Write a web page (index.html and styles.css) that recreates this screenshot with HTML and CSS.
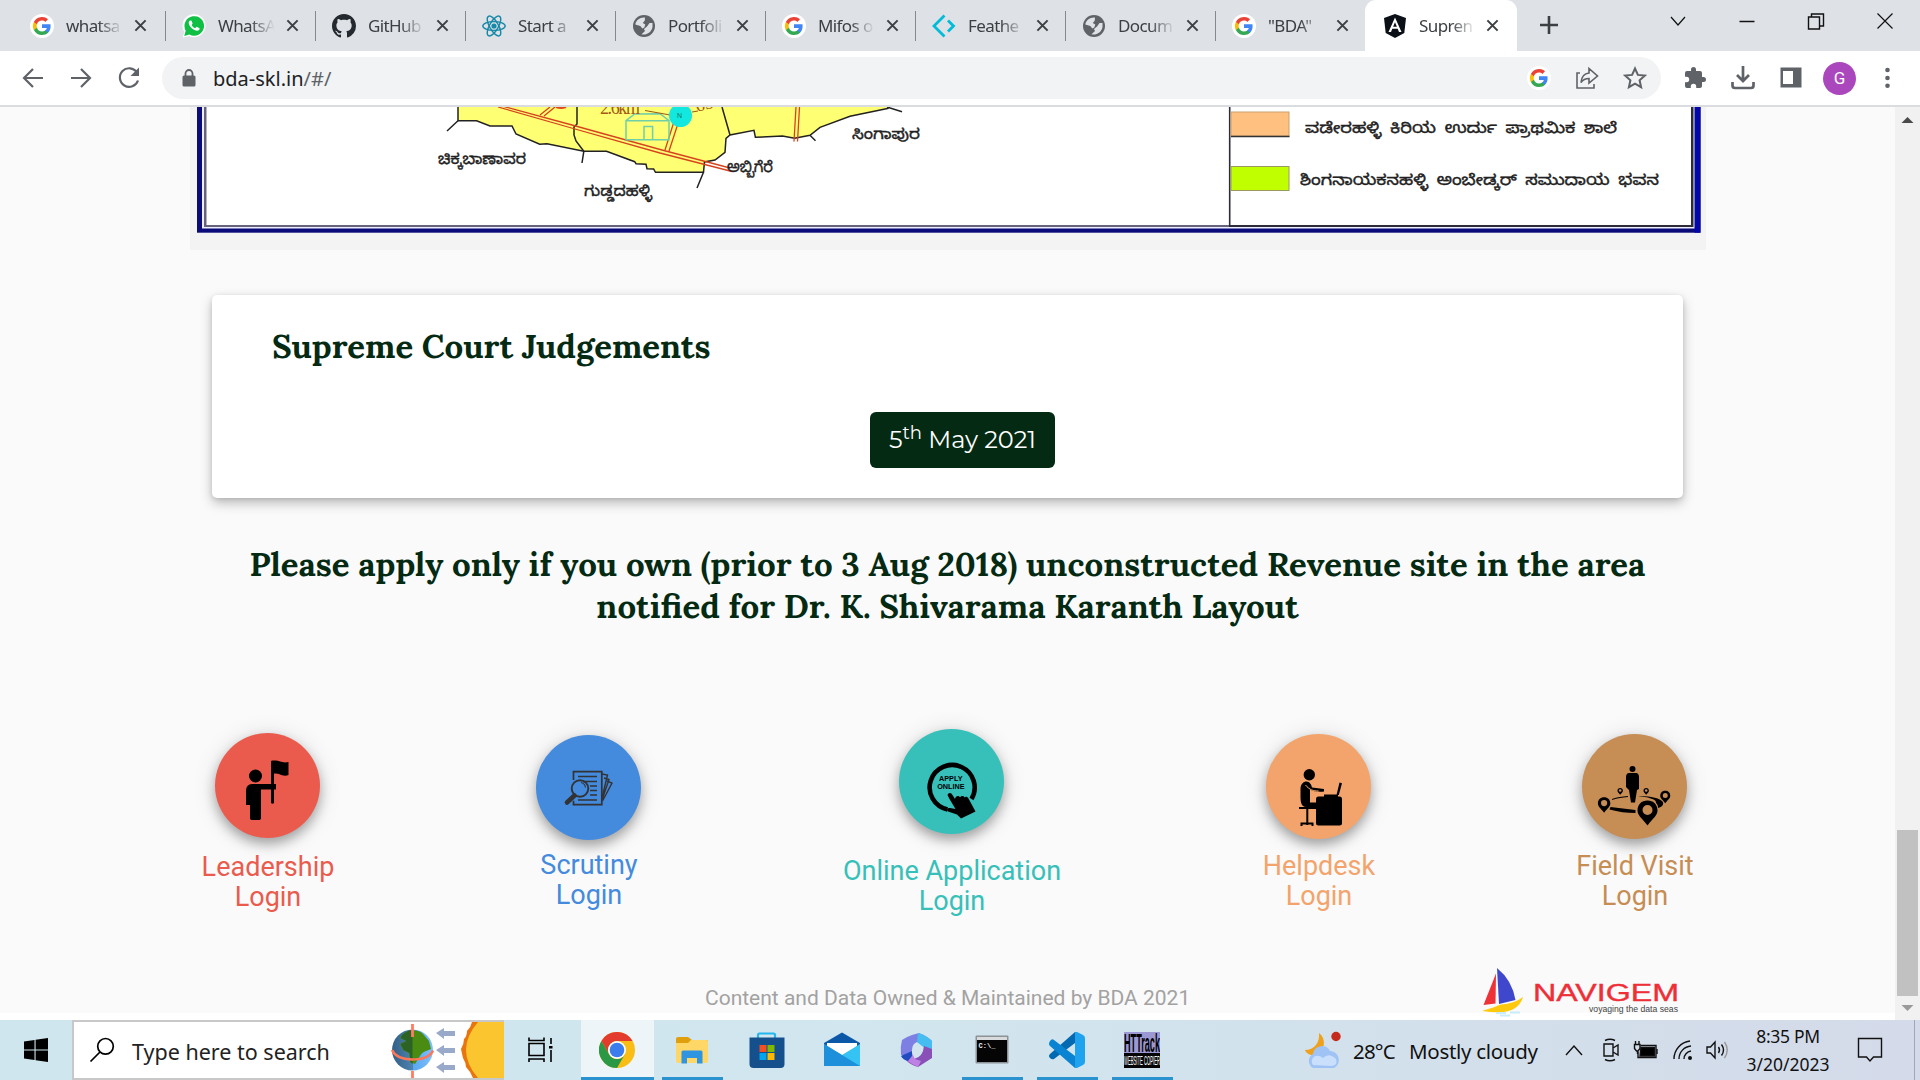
FILE: index.html
```html
<!DOCTYPE html>
<html lang="en">
<head>
<meta charset="utf-8">
<title>Supreme Court Judgements</title>
<link rel="stylesheet" href="styles.css">
</head>
<body>
<svg class="defs" width="0" height="0" aria-hidden="true">
  <symbol id="google" viewBox="0 0 24 24">
    <circle cx="12" cy="12" r="12" fill="#fff"/>
    <path d="M20.6 12.2c0-.7-.1-1.3-.2-1.9H12v3.6h4.8a4.1 4.1 0 0 1-1.8 2.7v2.3h2.9c1.7-1.6 2.7-3.9 2.7-6.7z" fill="#4285f4"/>
    <path d="M12 21c2.4 0 4.500-.8 6-2.200l-2.900-2.300c-.8.6-1.900.9-3.100.9a5.400 5.400 0 0 1-5.100-3.700H3.900V16A9 9 0 0 0 12 21z" fill="#34a853"/>
    <path d="M6.900 13.700a5.300 5.300 0 0 1 0-3.400V8H3.900a9 9 0 0 0 0 8z" fill="#fbbc05"/>
    <path d="M12 6.600c1.300 0 2.500.5 3.400 1.300L18 5.300A9 9 0 0 0 3.900 8l3 2.300A5.400 5.400 0 0 1 12 6.600z" fill="#ea4335"/>
  </symbol>
  <symbol id="close" viewBox="0 0 14 14"><path d="M1.500 1.500l11 11M12.500 1.500l-11 11" stroke="#3c4043" stroke-width="2.200" fill="none"/></symbol>
  <symbol id="world" viewBox="0 0 24 24">
    <circle cx="12" cy="12" r="11" fill="#5f6368"/>
    <path d="M13 3.500C8 3 4 6 3.300 10.500l5 1.500 2 2.500 2-1 1-3-2.500-1.500 2-2.500zM20.500 9l-3 0-2.500 3.500-3 2.500 1 2-3.500 3.300c5 1.200 10-2 11-7.300z" fill="#dee1e6"/>
  </symbol>
</svg>

<header class="tabstrip">
  <div class="tab tab-first"><svg class="fav"><use href="#google"/></svg><span class="tab-title">whatsa</span><svg class="x"><use href="#close"/></svg></div>
  <div class="tab"><svg class="fav" viewBox="0 0 24 24"><circle cx="12" cy="11.700" r="11.500" fill="#fff"/><path d="M.8 23.500L2.500 17l5 5z" fill="#fff"/><path d="M2.200 22l1.500-5.300A9.800 9.800 0 1 1 7.500 20.500z" fill="#10c045"/><path d="M8.300 6.500c-.8 0-1.700 1-1.600 2.300.3 4 5 8 8.600 8 1.500-.1 2.400-1.200 2.300-2.500l-3-1.500-1.400 1.500c-1.500-.6-2.900-1.900-3.600-3.400L10.600 9.600 9.500 6.800z" fill="#fff"/></svg><span class="tab-title">WhatsA</span><svg class="x"><use href="#close"/></svg></div>
  <div class="tab"><svg class="fav" viewBox="0 0 16 16"><path fill="#24292f" d="M8 0C3.580 0 0 3.580 0 8c0 3.540 2.290 6.530 5.470 7.590.4.070.55-.17.55-.38 0-.19-.01-.82-.01-1.490-2.010.37-2.530-.49-2.690-.94-.09-.23-.48-.94-.82-1.130-.28-.15-.68-.52-.01-.53.63-.01 1.080.58 1.230.82.72 1.210 1.870.87 2.330.66.070-.52.28-.87.51-1.070-1.780-.2-3.640-.89-3.640-3.950 0-.87.31-1.590.82-2.150-.08-.2-.36-1.020.08-2.120 0 0 .67-.21 2.200.82.64-.18 1.320-.27 2-.27s1.360.09 2 .27c1.530-1.040 2.200-.82 2.200-.82.44 1.100.16 1.920.08 2.120.51.56.82 1.270.82 2.150 0 3.070-1.870 3.750-3.650 3.950.29.25.54.73.54 1.480 0 1.070-.01 1.930-.01 2.200 0 .21.15.46.55.38A8.010 8.010 0 0 0 16 8c0-4.420-3.580-8-8-8z"/></svg><span class="tab-title">GitHub</span><svg class="x"><use href="#close"/></svg></div>
  <div class="tab"><svg class="fav" viewBox="0 0 24 24" fill="none" stroke="#1688a8" stroke-width="1.400"><circle cx="12" cy="12" r="1.900" fill="#1688a8"/><ellipse cx="12" cy="12" rx="11.200" ry="4.400"/><ellipse cx="12" cy="12" rx="11.200" ry="4.400" transform="rotate(60 12 12)"/><ellipse cx="12" cy="12" rx="11.200" ry="4.400" transform="rotate(120 12 12)"/></svg><span class="tab-title">Start a</span><svg class="x"><use href="#close"/></svg></div>
  <div class="tab"><svg class="fav"><use href="#world"/></svg><span class="tab-title">Portfoli</span><svg class="x"><use href="#close"/></svg></div>
  <div class="tab"><svg class="fav"><use href="#google"/></svg><span class="tab-title">Mifos o</span><svg class="x"><use href="#close"/></svg></div>
  <div class="tab"><svg class="fav" viewBox="0 0 24 24" fill="none" stroke="#00bcd9" stroke-width="2.800"><path d="M12.500 1.500L2 12l10.500 10.500M16 6.500l5.500 5.500-5.500 5.500"/></svg><span class="tab-title">Feathe</span><svg class="x"><use href="#close"/></svg></div>
  <div class="tab"><svg class="fav"><use href="#world"/></svg><span class="tab-title">Docum</span><svg class="x"><use href="#close"/></svg></div>
  <div class="tab tab-last"><svg class="fav"><use href="#google"/></svg><span class="tab-title">"BDA"</span><svg class="x"><use href="#close"/></svg></div>
  <div class="tab tab-active"><svg class="fav" viewBox="0 0 24 24"><path d="M12 0l11 4-1.700 15L12 24l-9.300-5L1 4z" fill="#0b1017"/><path d="M12 3.500L5.500 18H8l1.300-3.300h5.400L16 18h2.500zm0 4.800l1.900 4.400h-3.800z" fill="#fff"/></svg><span class="tab-title">Supren</span><svg class="x"><use href="#close"/></svg></div>
  <svg class="newtab" viewBox="0 0 18 18"><path d="M9 0v18M0 9h18" stroke="#3c4043" stroke-width="2.600"/></svg>
  <div class="winctl">
    <svg viewBox="0 0 20 20"><path d="M3 6l7 8 7-8" /></svg>
    <svg viewBox="0 0 20 20"><path d="M2.500 10.500h15" stroke-width="1.500"/></svg>
    <svg viewBox="0 0 20 20"><path d="M2.500 6h11v12h-11zM5.500 6V3h12v12h-4" stroke-width="1.400"/></svg>
    <svg viewBox="0 0 20 20"><path d="M2.500 2.500l15 15M17.500 2.500l-15 15"/></svg>
  </div>
</header>

<nav class="toolbar">
  <svg class="tb" viewBox="0 0 24 24"><path d="M22 12H3M12 3l-9 9 9 9"/></svg>
  <svg class="tb" viewBox="0 0 24 24"><path d="M2 12h19M12 3l9 9-9 9"/></svg>
  <svg class="tb" viewBox="0 0 24 24"><path d="M20 6.500A9.300 9.300 0 1 0 21 14.500"/><path d="M22 1.500v8.500h-8.500z" fill="#5f6368" stroke="none"/></svg>
  <div class="omnibox">
    <svg class="lock" viewBox="0 0 14 18"><path d="M3.500 8V4.500a3.500 3.500 0 0 1 7 0V8" fill="none" stroke="#5f6368" stroke-width="1.800"/><rect x=".5" y="6.500" width="13" height="11" rx="1.500" fill="#5f6368"/></svg>
    <span class="url">bda-skl.in<span class="url-path">/#/</span></span>
    <svg class="ob ob-google"><use href="#google"/></svg>
    <svg class="ob" viewBox="0 0 24 24"><path d="M5 7H2v15h17v-4M14 7V2.500l8.500 7.500-8.500 7v-4.500c-3.500 0-6 1-8 4 .5-5.500 3-9 8-9.500z" /></svg>
    <svg class="ob" viewBox="0 0 24 24"><path d="M12 2.500l2.900 6.400 7 .7-5.300 4.700 1.500 6.900-6.100-3.600-6.100 3.600 1.500-6.900L2.100 9.600l7-.7z" stroke-width="2"/></svg>
  </div>
  <svg class="tool" viewBox="0 0 24 24"><path d="M20.500 11H19V7a2 2 0 0 0-2-2h-4V3.500a2.500 2.500 0 0 0-5 0V5H4a2 2 0 0 0-2 2v3.800h1.500a2.700 2.700 0 0 1 0 5.400H2V20a2 2 0 0 0 2 2h3.800v-1.500a2.700 2.700 0 0 1 5.400 0V22H17a2 2 0 0 0 2-2v-4h1.500a2.500 2.500 0 0 0 0-5z" fill="#5f6368"/></svg>
  <svg class="tool" viewBox="0 0 24 24"><path d="M12 0v14M6 9l6 6 6-6M1.500 16v3.500a2.500 2.500 0 0 0 2.500 2.500h16a2.500 2.500 0 0 0 2.500-2.500V16" fill="none" stroke="#5f6368" stroke-width="2.700"/></svg>
  <svg class="tool" viewBox="0 0 24 24"><path d="M1.500 1.500h21v20h-21zM4 5v13h10V5z" fill="#5f6368" fill-rule="evenodd"/></svg>
  <span class="avatar">G</span>
  <svg class="tool" viewBox="0 0 24 24" fill="#5f6368"><circle cx="11.500" cy="4" r="2.300"/><circle cx="11.500" cy="12" r="2.300"/><circle cx="11.500" cy="19.800" r="2.300"/></svg>
</nav>

<div class="viewport">
<main class="page">
  <svg class="map" viewBox="190 107 1516 143" font-family="'Noto Sans Kannada','Lohit Kannada','Noto Sans',sans-serif">
    <rect x="190" y="107" width="1516" height="143" fill="#f3f3f3"/>
    <rect x="197" y="90" width="1503.500" height="142.700" fill="#0a0a78"/>
    <rect x="1694.500" y="90" width="6" height="142.700" fill="#0307a8"/>
    <rect x="202" y="90" width="1492.500" height="138.500" fill="#eef"/>
    <rect x="204" y="90" width="1489" height="137" fill="#66647c"/>
    <path d="M1691 107h2.500v120H1229v-2h462z" fill="#2c2c38"/>
    <rect x="206.500" y="90" width="1484.500" height="135" fill="#fff"/>
    <path d="M458 100V120.700h18.600L490 126h22l4 8 23.700 10.300 7.300-.6 36.800 7.600h22.700l28.200 10.400 1.300 2 10 .6 1 4.400 6.600.3 1.900 3.300h48l1-10.300 10.500-2 10-7.700 1-14 4-3.300 24-4.700 1.400 7 27.100-1.300 12.100 2.300 15.400-3 10-8 30-11 38.700-8 4-8z" fill="#ffff73"/>
    <g fill="none" stroke="#222" stroke-width="1.500">
      <path d="M458 100V120.700h18.600L490 126h22l4 8 23.700 10.300 7.300-.6 36.800 7.600h22.700l28.200 10.400 1.300 2 10 .6 1 4.400 6.600.3 1.900 3.300h48l1-10.300 10.500-2 10-7.700 1-14 4-3.300 24-4.700 1.400 7 27.100-1.300 12.100 2.300 15.400-3 10-8 30-11 38.700-8"/>
      <path d="M458 120.700L447 131M583.800 151.300L582 163M577 107v17l-3 3v8l2 6 7.800 10.300M722 107l8 28M703.500 172.300L697 188M810 135.300l5.500 5.400M887 107l15 4.700"/>
    </g>
    <g fill="none" stroke="#d8431f" stroke-width="1.300">
      <path d="M502 106l70 19 90 25 68 18M498 107l70 20 92 26 72 18.500M540 115l10-8M544 116l11-9M799.500 107l-2 34.500M796 107l-2 34.500M665 150l9.500-30M669 151l9.500-29"/>
    </g>
    <path d="M626 139.700v-19l8.700-6.700 25.300-.3 9 7v19zM626 120.700h43M644 139.700V126.500h8.600v13.200" fill="none" stroke="#70cfa8" stroke-width="1.500"/>
    <path d="M645 110.500l28 5M692 112l6-1" stroke="#a15b16" stroke-width="1.200"/>
    <circle cx="680.500" cy="115.500" r="11.500" fill="#12e8df"/>
    <path d="M556 107q5 2 10 0" stroke="#e04a20" stroke-width="2" fill="none"/>
    <text x="677" y="118" font-size="7" fill="#175" font-family="Liberation Sans">N</text>
    <text x="600" y="113.500" font-size="18" fill="#a35a17" font-family="Liberation Serif" textLength="40">2.6km</text>
    <text x="697" y="112" font-size="18" fill="#a35a17" font-family="Liberation Serif" transform="rotate(-15 697 112)">65</text>
    <g fill="#222" stroke="#222" stroke-width=".4" font-size="15">
      <text x="438" y="164" textLength="88" lengthAdjust="spacingAndGlyphs">ಚಿಕ್ಕಬಾಣಾವರ</text>
      <text x="584" y="196" textLength="68" lengthAdjust="spacingAndGlyphs">ಗುಡ್ಡದಹಳ್ಳಿ</text>
      <text x="727" y="172" textLength="46" lengthAdjust="spacingAndGlyphs">ಅಬ್ಬಿಗೆರೆ</text>
      <text x="852" y="139" textLength="68" lengthAdjust="spacingAndGlyphs">ಸಿಂಗಾಪುರ</text>
      <g word-spacing="3">
      <text x="1305" y="133" textLength="312" lengthAdjust="spacingAndGlyphs">ವಡೇರಹಳ್ಳಿ ಕಿರಿಯ ಉರ್ದು ಪ್ರಾಥಮಿಕ ಶಾಲೆ</text>
      <text x="1300" y="185" textLength="359" lengthAdjust="spacingAndGlyphs">ಶಿಂಗನಾಯಕನಹಳ್ಳಿ ಅಂಬೇಡ್ಕರ್ ಸಮುದಾಯ ಭವನ</text>
      </g>
    </g>
    <path d="M1229.700 107v119" stroke="#2c2c38" stroke-width="1.600"/>
    <rect x="1231" y="112" width="58" height="24" fill="#ffc080" stroke="#c9a070"/>
    <path d="M1231 136.500h58.500" stroke="#333" stroke-width="1.300"/>
    <rect x="1231" y="166.500" width="58" height="24" fill="#bfff00" stroke="#9a9a60"/>
  </svg>

  <section class="card">
    <h2 class="card-title">Supreme Court Judgements</h2>
    <a class="date-btn">5<sup>th</sup> May 2021</a>
  </section>

  <h2 class="notice">Please apply only if you own (prior to 3 Aug 2018) unconstructed Revenue site in the area<br>notified for Dr. K. Shivarama Karanth Layout</h2>

  <section class="portals">
    <a class="portal leadership">
      <span class="disc"><svg viewBox="0 0 105 105"><circle cx="40.500" cy="43" r="6.500"/><path d="M31 58c0-4 2-7 6-7h24v5.500H46V85c0 1.500-1 2-2 2h-7c-1.500 0-2-1-2-2V72h-4z"/><path d="M56 29c0-1 .5-1.500 1.500-1.500h3c4 0 7 3 13 1.500v13c-5 2.500-8-2-14.500-1.500V70c-1 1-2 1-3 0z"/></svg></span>
      <span class="label">Leadership<br>Login</span>
    </a>
    <a class="portal scrutiny">
      <span class="disc"><svg viewBox="0 0 105 105" fill="none" stroke="#333" stroke-width="1.700"><path d="M37.500 45v-8.300h28.300v33H37.500v-4"/><path d="M42 41.500h19M47 46.500h14M54 51h7M54 55.500h7M54 60h7M42 65h19" stroke-width="1.500"/><path d="M66 39l5.500 1L66 63M68 43l5 1.500L66 65M71 46l5 2-9.500 18" stroke-width="1.400"/><circle cx="44" cy="53.500" r="8.300" stroke-width="1.900"/><path d="M45 47.500a6 6 0 0 1 4.500 5" stroke-width="1.200"/><path d="M38.500 60.500l-7.500 7" stroke-width="4.600" stroke-linecap="round"/></svg></span>
      <span class="label">Scrutiny<br>Login</span>
    </a>
    <a class="portal online">
      <span class="disc"><svg viewBox="0.500 0 105 105"><path d="M49 80.500a22.500 22.500 0 1 1 24-10.500" fill="none" stroke="#000" stroke-width="4.600"/><text x="40.500" y="52" textLength="23.500" lengthAdjust="spacingAndGlyphs" font-family="Liberation Sans" font-weight="bold" font-size="7.500">APPLY</text><text x="38.700" y="60" textLength="27.500" lengthAdjust="spacingAndGlyphs" font-family="Liberation Sans" font-weight="bold" font-size="7.500">ONLINE</text><path d="M49 66c1-3 4-2.500 5 0l2.500 4 .5-1.500c1-2 4-2 4.500 0 1-2 4-2 4.500 0 1-1.500 3-1 4 1l7 13-14.500 7-4-4-9-3c-2-2 0-4 2-3.500l5.500 1-6-10z"/></svg></span>
      <span class="label">Online Application<br>Login</span>
    </a>
    <a class="portal helpdesk">
      <span class="disc"><svg viewBox="0 0 105 105"><circle cx="43.300" cy="40.700" r="5.700"/><path d="M34.500 55c0-5 3-7.500 6-7.500s5 3 5.500 6l12 1.500v2.500c-5 .5-11 0-14-2v13h7V73H40c-5 0-5.500-6-5.500-10z"/><path d="M39.500 51c4 5 8 6 13 6" fill="none" stroke="#f2a46c" stroke-width="1"/><path d="M73.500 48.500l2.500.7L72.800 61h-2.300zM58 60.500h14V63H58z"/><rect x="50" y="62.500" width="26" height="29" rx="2.500"/><path d="M33 74h17M41.300 75v16M35.500 92v-2.500h11V92" fill="none" stroke="#000" stroke-width="2"/></svg></span>
      <span class="label">Helpdesk<br>Login</span>
    </a>
    <a class="portal field">
      <span class="disc"><svg viewBox="0 0 105 105"><circle cx="50.500" cy="35" r="3"/><path d="M47 39h7c2 0 3 2 3 4v12l-2 1-2 12.500h-4L47 56l-3-3V43c0-2 1-4 3-4z"/><path id="pin" fill-rule="evenodd" d="M65.500 66.500c6 0 10 4 10 10 0 5-4 7-10 15-6-8-10-10-10-15 0-6 4-10 10-10zm0 4.500a5 5 0 1 0 0 10 5 5 0 0 0 0-10z"/><use href="#pin" transform="translate(-18.500 22) scale(.62)"/><use href="#pin" transform="translate(50.500 23.500) scale(.5)"/><use href="#pin" transform="translate(20.500 36) scale(.27)"/><use href="#pin" transform="translate(46.500 36) scale(.27)"/><path d="M28.500 73l25 3v3c-9 0-17-1-26-3.500zM30 65c5-2 10-2.500 16-3v1c-6 .5-10 1-16 3zM56 62c8 0 20 1 24 5 3 3 0 6-4 7 0-3-1-4-2-5 1-4-9-6-18-7z"/></svg></span>
      <span class="label">Field Visit<br>Login</span>
    </a>
  </section>

  <footer class="foot">
    <span class="copyright">Content and Data Owned &amp; Maintained by BDA 2021</span>
    <svg class="navigem" viewBox="0 0 200 50" font-family="'Liberation Sans',Arial,sans-serif">
      <path d="M14 5.500L1.500 37l12-1.500z" fill="#ee3338"/><path d="M15 0q15 12 18.500 32L17 36z" fill="#3f48cc"/><path d="M0 43q13-4 19-6.500Q32 36 41 29q-4 13-19 15-9 1-22-1z" fill="#ffc90e"/><path d="M14 45l10 0M18 47.500h10M28 44.500h10" stroke="#c9ecfa" stroke-width="2"/>
      <text x="51" y="33" font-size="24.500" textLength="146" lengthAdjust="spacingAndGlyphs" fill="#ee2f38" stroke="#ee2f38" stroke-width=".4">NAVIGEM</text>
      <text x="107" y="44" font-size="9.500" textLength="89" lengthAdjust="spacingAndGlyphs" fill="#444">voyaging the data seas</text>
    </svg>
  </footer>
</main>
<aside class="scrollbar">
  <svg viewBox="0 0 25 26"><path d="M6.500 16l6-6 6 6z" fill="#4a4a4a"/></svg>
  <div class="thumb"></div>
  <svg viewBox="0 0 25 24"><path d="M6.500 9l6 6 6-6z" fill="#9a9a9a"/></svg>
</aside>
</div>

<footer class="taskbar">
  <div class="start"><svg viewBox="0 0 24 24"><path d="M0 3.500L10.500 2v9.400H0zM11.600 1.800L24 0v11.400H11.600zM0 12.600h10.500V22L0 20.500zM11.600 12.600H24V24l-12.400-1.800z"/></svg></div>
  <div class="search">
    <svg class="mag" viewBox="0 0 26 26" fill="none" stroke="#000" stroke-width="1.700"><circle cx="16.500" cy="9.300" r="7.800"/><path d="M11 15L1.500 24.500"/></svg>
    <span class="search-text">Type here to search</span>
    <svg class="solar" viewBox="390 1022 114 56">
      <defs><linearGradient id="gl"><stop offset="0" stop-color="#315f86"/><stop offset=".5" stop-color="#4d83b0"/><stop offset=".5" stop-color="#58a6ee"/><stop offset="1" stop-color="#7ec0ff"/></linearGradient></defs>
      <circle cx="412.500" cy="1050" r="20.500" fill="url(#gl)"/>
      <path d="M402 1035c6-6 16-6 21-1l6 7 2 8c-5 2-9 3-11 7l-5 8-5-2-1-9-6-3-3-6 6-3-6-3z" fill="#4a8b12"/><path d="M402 1035c3-3 7-5 10.500-5v34l-2-2-1-9-6-3-3-6 6-3-6-3z" fill="#2c6324"/>
      <path d="M412.500 1024v13M412.500 1071v7" stroke="#ff7d61" stroke-width="2.800"/><path d="M392 1050q4 9 20 9.500 17 0 21-9" fill="none" stroke="#ff7558" stroke-width="2.500"/>
      <g fill="#98a9c9"><path id="arr" d="M436 1033l8-5v3h11v5h-11v3z"/><use href="#arr" y="17"/><use href="#arr" y="34"/></g>
      <path d="M472 1022q-1 5-5 9 0 5-3 8 0 5-3 10 1 5 2 9 3 5 3 9 5 5 7 11h31v-56z" fill="#e9750f"/><path d="M478 1022q-24 28 0 56h26v-56z" fill="#fbc52f"/>
    </svg>
  </div>
  <div class="task view"><svg viewBox="0 0 28 28" fill="none" stroke="#000" stroke-width="1.600"><path d="M4 7.500h15v12H4zM4 1.500v3h15v-3M4 26v-3h15v3M26 2v6M26 14v12"/><path d="M24 10h3.500v2.500H24z" fill="#000" stroke="none"/></svg></div>
  <div class="task chrome on"><svg viewBox="0 0 36 36"><circle cx="18" cy="18" r="18" fill="#f9bd15"/><path d="M2.400 9A18 18 0 0 1 33.600 9H18a9 9 0 0 0-8 13z" fill="#e33b2e"/><path d="M2.400 9A18 18 0 0 0 18 36l7.800-13.500A9 9 0 0 1 10.200 22.500z" fill="#2b9846"/><circle cx="18" cy="18" r="9" fill="#fff"/><circle cx="18" cy="18" r="7.300" fill="#3b7ded"/></svg></div>
  <div class="task on"><svg viewBox="0 0 36 36"><path d="M2 7q0-2 2-2h10l4 3h14q2 0 2 2v8H2z" fill="#e09f0c"/><path d="M2 11h12l3-3h15q2 0 2 2v19q0 2-2 2H4q-2 0-2-2z" fill="#ffd766"/><path d="M7.500 31.500V20q0-1.500 1.500-1.500h18q1.500 0 1.500 1.500v11.500h-5.500V26H13v5.500z" fill="#2f95e0"/></svg></div>
  <div class="task"><svg viewBox="0 0 36 36"><path d="M9 7V3q0-1.500 1.500-1.500h14Q26 1.500 26 3v4" fill="none" stroke="#23b6f0" stroke-width="2.200"/><path d="M.5 5.500h35V32q0 4-4 4h-27q-4 0-4-4z" fill="#15508c"/><path d="M10.500 13h7v7h-7z" fill="#f25022"/><path d="M18.500 13h7v7h-7z" fill="#7fba00"/><path d="M10.500 21h7v7h-7z" fill="#00a4ef"/><path d="M18.500 21h7v7h-7z" fill="#ffb900"/></svg></div>
  <div class="task"><svg viewBox="0 0 36 36"><path d="M0 11L18 .5 36 11v4H0z" fill="#0b58a8"/><path d="M3 11h30v12H3z" fill="#fff"/><path d="M0 12l18 11 18-11v22H0z" fill="#35c3f3"/><path d="M0 12l36 22H0z" fill="#1d90dc"/></svg></div>
  <div class="task"><svg viewBox="0 0 36 36"><path d="M13 3l7-2q8 3 13 8v11l-9-7-6-3q-5 2-5 8l-2 9-9-4q-1-8 1-15 4-3 10-5z" fill="#7d7fe3"/><path d="M19 1q8 2 14 8v12l-10-7-5-4z" fill="#46bdf0"/><path d="M33 17v9l-14 9q-8-2-13-8l9 0q9-2 10-13z" fill="#8951b8"/><path d="M3 25l10-4 3 6 6 2-3 6-6-3z" fill="#bd82e4"/><path d="M2 24l11-5v5l-4 5q-5-1-7-5z" fill="#204cc0"/><circle cx="18.500" cy="18.500" r="5" fill="#d2e4ee"/></svg></div>
  <div class="task on"><svg viewBox="0 0 36 36"><rect x="1.500" y="3.500" width="33" height="28" rx="1" fill="#8d9298"/><path d="M3 5h30v3H3z" fill="#d9dadc"/><path d="M3 8h30v22H3z" fill="#050505"/><text x="4.500" y="15.500" font-family="Liberation Mono" font-weight="bold" font-size="7" fill="#eee" textLength="17">C:\_</text></svg></div>
  <div class="task on"><svg viewBox="0 0 36 36"><path d="M26 0v11L5 27q-2 1-4-1-2-2 0-4z" fill="#0369b0"/><path d="M1 9q2-3 4-1l21 16v12L1 14q-2-2 0-5z" fill="#0a84d2"/><path d="M26 0q1-.5 2 0l6 3q2 1 2 3v24q0 2-2 3l-6 3q-1 .5-2 0z" fill="#1fa3ee"/></svg></div>
  <div class="task on"><svg viewBox="0 0 36 36" font-family="'Liberation Sans',Arial,sans-serif"><path d="M0 0h36v36H0z" fill="#050508"/><path d="M0 0h36v21H0z" fill="#9c98d4"/><text x="0" y="20" font-size="25" font-weight="bold" textLength="36" lengthAdjust="spacingAndGlyphs">HTTrack</text><text x="0" y="33" font-size="12" fill="#fff" textLength="36" lengthAdjust="spacingAndGlyphs">WEBSITE COPIER</text></svg></div>

  <div class="tray">
    <svg class="weather" viewBox="0 0 38 40"><path d="M15 3c8 6 6 19-4 22-5 1-9-2-10-5 9 0 15-7 14-17z" fill="#f0a11c"/><circle cx="32" cy="6.500" r="4.700" fill="#c42b1c"/><path d="M9 38a8 8 0 0 1 0-14 9 9 0 0 1 17-3 9 9 0 0 1 4 17z" fill="#9fc3f5"/><path d="M9 35a6 6 0 0 1 2-9 9 9 0 0 1 8 2q6-6 13 1 2 6-4 7z" fill="#c9dffb"/></svg>
    <span class="temp">28°C</span><span class="cond">Mostly cloudy</span>
    <svg class="chev" viewBox="0 0 18 12"><path d="M1 11l8-9 8 9"/></svg>
    <svg class="cam" viewBox="0 0 20 24"><path d="M3 6h9v12H3zM12 10l5-3v10l-5-3M4 2.500q5-2.500 10 0M4 21.500q5 2.500 10 0"/></svg>
    <svg class="bat" viewBox="0 0 26 20"><path d="M7.500 5.500H23v12H5v-6"/><path d="M8 7.500h13.500v8.500H7z" fill="#000"/><path d="M24 9v5M1.500 4.500v4l2 2.500h1.500l2-2.500v-4zM2.500 4V1M6 4V1M4.500 11v3"/></svg>
    <svg class="wifi" viewBox="0 0 20 22"><path d="M1 20A18 18 0 0 1 17 2M6 20A13 13 0 0 1 18 7M11 20a8 8 0 0 1 7-8"/><circle cx="17" cy="19" r="1.300" fill="#000"/></svg>
    <svg class="vol" viewBox="0 0 24 22"><path d="M1 8h3.500L9 3v16l-4.500-5H1zM12.500 8q2 3 0 6M15.500 5.500q4 5.500 0 11"/><path d="M18.500 3q5.500 8 0 16" stroke="#999"/></svg>
    <div class="clock"><span class="time">8:35 PM</span><span class="date">3/20/2023</span></div>
    <svg class="note" viewBox="0 0 26 26"><path d="M1.500 1.500h23v18.500h-8L13 24l-3.500-4h-8z"/></svg>
  </div>
</footer>
</body>
</html>
```
FILE: styles.css
```css
* { box-sizing: border-box; }
body { margin: 0; width: 1920px; height: 1080px; overflow: hidden; background: #fff; font-family: "Noto Sans", "Open Sans", sans-serif; display: flex; flex-direction: column; }
svg { display: block; flex: none; }
.defs { width: 0; height: 0; position: absolute; }

.tabstrip { display: flex; height: 51px; flex: none; background: #dee1e6; padding-left: 15px; }
.tab { width: 150px; height: 51px; display: flex; align-items: center; padding: 0 0 0 16px; flex: none; background: linear-gradient(#85888d, #85888d) right 11px / 1px 30px no-repeat; }
.tab-first { width: 151px; padding-left: 15px; }
.tab-last { background: none; }
.tab .fav { width: 24px; height: 24px; margin-right: 12px; }
.tab-title { width: 58px; margin-top: -1px; white-space: nowrap; font-size: 17px; letter-spacing: -0.6px; color: #3c4043; -webkit-mask-image: linear-gradient(90deg, #000 55%, transparent 98%); mask-image: linear-gradient(90deg, #000 55%, transparent 98%); }
.tab .x { width: 13px; height: 13px; margin-left: 10px; }
.tab-active { background: #fff; width: 152px; border-radius: 11px 11px 0 0; margin-left: -1px; padding-left: 18px; }
.tab-active .x { margin-left: 9px; }
.newtab { width: 18px; height: 18px; margin: 16px 0 0 23px; }
.winctl { display: flex; margin-left: auto; padding: 11px 25px 0 0; gap: 49px; }
.winctl svg { width: 20px; height: 20px; fill: none; stroke: #111; stroke-width: 1.2; }

.toolbar { display: flex; align-items: center; height: 56px; flex: none; border-bottom: 2px solid #dadce0; padding: 0 0 0 21px; }
.tb { width: 24px; height: 24px; margin-right: 24px; fill: none; stroke: #5f6368; stroke-width: 2.2; }
.tb + .tb + .tb { margin-right: 21px; }
.omnibox { width: 1499px; height: 42px; flex: none; border-radius: 21px; background: #f1f3f4; display: flex; align-items: center; padding: 0 14px 0 20px; margin-right: 22px; }
.lock { width: 14px; height: 18px; margin-right: 17px; }
.url { font-size: 20px; letter-spacing: 0; color: #202124; margin-right: auto; }
.url-path { color: #5f6368; }
.ob { width: 24px; height: 24px; margin-left: 24px; fill: none; stroke: #5f6368; stroke-width: 1.6; }
.ob-google { width: 24px; height: 24px; stroke: none; }
.tool { width: 24px; height: 24px; margin-right: 24px; }
.avatar { width: 33px; height: 33px; margin: 0 20px 0 -4px; border-radius: 50%; background: #ab47bc; color: #fff; font: 17px/33px Roboto, sans-serif; text-align: center; flex: none; }

.viewport { display: flex; height: 913px; flex: none; }
.page { width: 1895px; height: 906px; background: #fafafa; flex: none; }
.map { width: 1516px; height: 143px; margin-left: 190px; }
.card { width: 1471px; height: 203px; margin: 45px 0 0 212px; padding: 29px 0 0 60px; background: #fff; border-radius: 5px; box-shadow: 0 5px 12px rgba(0,0,0,.26), 0 1px 4px rgba(0,0,0,.1); }
.card-title, .notice { font-family: Lora, "Liberation Serif", serif; font-weight: 700; font-size: 33px; color: #042a13; margin: 0; }
.card-title { line-height: 44px; }
.date-btn { display: block; width: 185px; height: 56px; margin: 44px 0 0 598px; border-radius: 6px; background: #042a13; color: #fff; font: 24px/56px Montserrat, "Open Sans", sans-serif; text-align: center; white-space: nowrap; }
.date-btn sup { font-size: 18px; line-height: 0; vertical-align: 9px; }
.notice { margin-top: 45px; line-height: 42px; text-align: center; white-space: nowrap; }

.portals { display: flex; align-items: flex-start; padding: 102px 0 0 157px; }
.portal { width: 220px; flex: none; text-align: center; font: 27px/30px Roboto, sans-serif; white-space: nowrap; }
.disc { display: block; width: 105px; height: 105px; margin: 0 auto; border-radius: 50%; box-shadow: 0 6px 12px rgba(0,0,0,.3), 0 2px 24px rgba(0,0,0,.12); }
.disc svg { width: 105px; height: 105px; }
.label { display: block; margin: 14px -1px 0 1px; }
.leadership { color: #ea5b4d; margin-top: 4px; }
.leadership .disc { background: #ea5b4d; }
.scrutiny { color: #448bde; margin: 6px 0 0 101px; }
.scrutiny .disc { background: #448bde; }
.online { color: #36c0b9; margin-left: 143px; }
.online .disc { background: #36c0b9; }
.helpdesk { color: #f2a46c; margin: 5px 0 0 147px; }
.helpdesk .disc { background: #f2a46c; }
.field { color: #c68d54; margin: 5px 0 0 96px; }
.field .disc { background: #c68d54; }
.scrutiny .label { margin-top: 10px; }
.online .label { margin-top: 22px; }
.helpdesk .label, .field .label { margin-top: 12px; }

.foot { display: flex; padding: 52px 0 0 705px; }
.copyright { width: 777px; font: 21px/24px Roboto, sans-serif; color: #a2a2a2; padding-top: 18px; }
.navigem { width: 200px; height: 50px; }

.scrollbar { width: 25px; height: 913px; background: #f1f1f1; display: flex; flex-direction: column; }
.scrollbar svg { width: 25px; height: 26px; }
.thumb { width: 21px; height: 166px; margin: 697px auto 0 2px; background: #c1c1c1; }
.scrollbar svg:last-child { height: 24px; }

.taskbar { height: 60px; flex: none; display: flex; background: linear-gradient(90deg, #cfe6ee, #d1e6ee 45%, #d2e1ec 70%, #d4dae9); }
.start { width: 72px; padding: 18px 0 0 24px; }
.start svg { width: 24px; height: 24px; }
.search { width: 432px; border: 2px solid #c8c8c8; border-right: 0; background: #fff; display: flex; align-items: center; padding-left: 15px; }
.mag { width: 26px; height: 26px; margin-right: 17px; }
.search-text { width: 258px; font-size: 21.5px; letter-spacing: 0; color: #222; white-space: nowrap; padding-top: 2px; }
.solar { width: 114px; height: 56px; }
.task { width: 61px; margin-right: 14px; flex: none; display: flex; align-items: center; justify-content: center; border-bottom: 3px solid transparent; padding: 3px 2px 0 0; }
.task svg { width: 36px; height: 36px; }
.task.view { margin: 0 11px 0 5px; }
.task.view svg { width: 28px; height: 28px; }
.on { border-color: #2a92cf; }
.chrome { width: 73px; margin-right: 8px; background: #edf5f9; }

.tray { display: flex; align-items: center; margin-left: auto; width: 616px; }
.tray svg { fill: none; stroke: #111; stroke-width: 1.4; }
.tray .weather { width: 38px; height: 40px; stroke: none; margin-right: 11px; }
.temp, .cond { font-size: 20.5px; white-space: nowrap; color: #111; flex: none; padding-top: 2px; }
.temp { width: 56px; letter-spacing: -0.8px; }
.cond { width: 156px; letter-spacing: -0.3px; }
.chev { width: 18px; height: 12px; margin-right: 18px; }
.cam { width: 20px; height: 24px; margin: 0 12px 0 0; }
.bat { width: 26px; height: 20px; margin-right: 14px; }
.wifi { width: 20px; height: 22px; margin-right: 13px; }
.vol { width: 24px; height: 22px; margin-right: 10px; }
.clock { width: 96px; text-align: center; font-size: 17.5px; line-height: 28px; letter-spacing: 0; color: #111; display: flex; flex-direction: column; }
.time { letter-spacing: -0.3px; }
.note { width: 26px; height: 26px; margin: 0 31px 0 21px; }
.tray::after { content: ""; width: 1px; height: 60px; background: #9fa9b6; flex: none; }
```
